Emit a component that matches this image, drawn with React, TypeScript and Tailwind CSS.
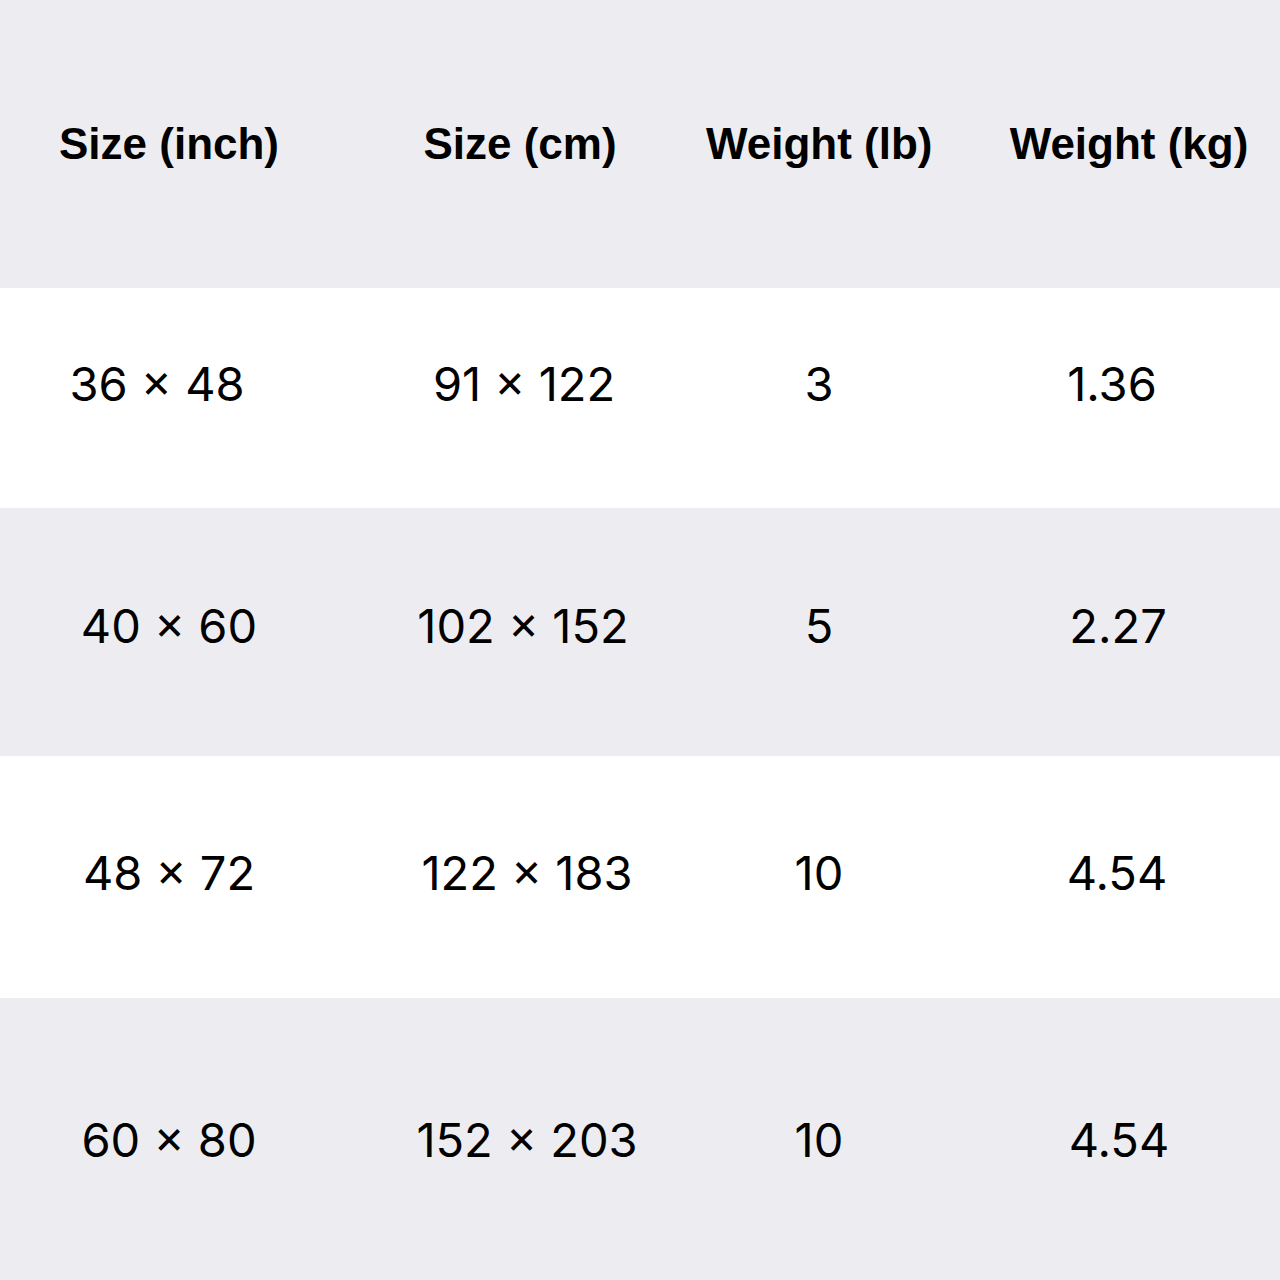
const headers = ['Size (inch)', 'Size (cm)', 'Weight (lb)', 'Weight (kg)'];

const rows = [
  {
    cells: ['36 × 48', '91 × 122', '3', '1.36'],
    cls: 'h-[220px] bg-white pb-[30px]',
    shift: ['pr-[24px]', 'pl-[4px]', '', 'pl-[12px]'],
  },
  {
    cells: ['40 × 60', '102 × 152', '5', '2.27'],
    cls: 'h-[248px] bg-[#ededf1] pb-[14px]',
    shift: ['', 'pl-[2px]', '', 'pl-[24px]'],
  },
  {
    cells: ['48 × 72', '122 × 183', '10', '4.54'],
    cls: 'h-[242px] bg-white pb-[10px]',
    shift: ['', 'pl-[10px]', '', 'pl-[22px]'],
  },
  {
    cells: ['60 × 80', '152 × 203', '10', '4.54'],
    cls: 'h-[282px] bg-[#ededf1]',
    shift: ['', 'pl-[10px]', '', 'pl-[26px]'],
  },
];

export default function App() {
  return (
    <div className="w-[1280px] h-[1280px] overflow-hidden bg-white text-black">
      <div className="grid grid-cols-[338px_368px_226px_348px] h-[288px] items-center bg-[#ededf1] font-['Liberation_Sans',Arial,sans-serif] font-bold text-[44px] leading-none">
        {headers.map((h, i) => (
          <div
            key={h}
            className={`text-center whitespace-nowrap ${i === 3 ? 'pl-[46px]' : ''} ${i === 1 ? 'pr-[4px]' : ''}`}
          >
            {h}
          </div>
        ))}
      </div>
      {rows.map((r, ri) => (
        <div
          key={ri}
          className={`grid grid-cols-[338px_368px_226px_348px] items-center font-['Inter','Noto_Sans',sans-serif] text-[47px] leading-none ${r.cls}`}
        >
          {r.cells.map((c, i) => (
            <div key={i} className={`text-center whitespace-nowrap ${r.shift[i]}`}>
              {c}
            </div>
          ))}
        </div>
      ))}
    </div>
  );
}
